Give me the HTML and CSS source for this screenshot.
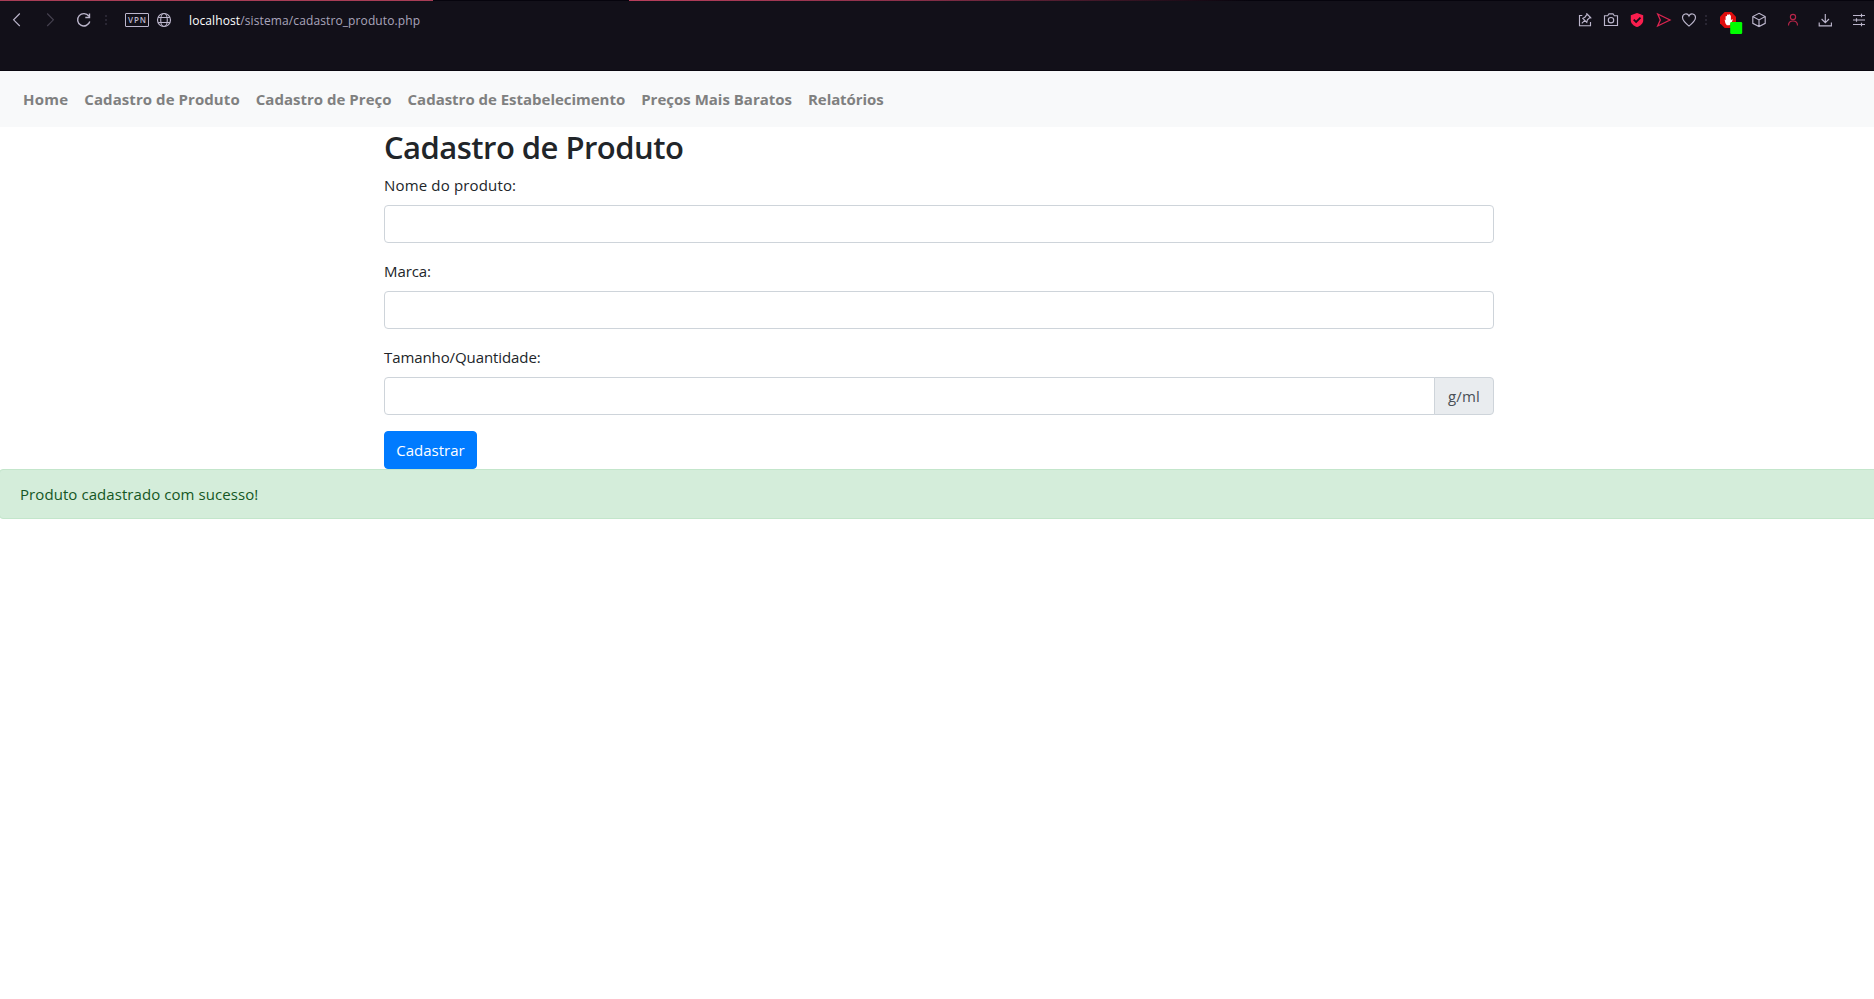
FILE: index.html
```html
<!DOCTYPE html>
<html lang="pt-BR">
<head>
<meta charset="utf-8">
<title>Cadastro de Produto</title>
<link rel="stylesheet" href="styles.css">
</head>
<body>
<header class="browser">
  <div class="tab-line"><span class="tab-line-left"></span><span class="tab-line-right"></span></div>
  <div class="toolbar">
    <svg class="icon back" viewBox="0 0 16 16"><path d="M11.8 1.5 5.6 7.8l6.2 6.2"/></svg>
    <svg class="icon forward" viewBox="0 0 16 16"><path d="M5.2 1.5l6.2 6.3L5.2 14"/></svg>
    <svg class="icon reload" viewBox="0 0 16 16"><path d="M12.9 4.2A6.2 6.2 0 1 0 13.8 9.5M13.5 1.5v4H9.3"/></svg>
    <svg class="dots dots-left" viewBox="0 0 4 12"><path d="M1 1h2v2H1zM1 5h2v2H1zM1 9h2v2H1z"/></svg>
    <span class="vpn">VPN</span>
    <svg class="icon globe" viewBox="0 0 16 16"><circle cx="8" cy="8" r="6.5"/><ellipse cx="8" cy="8" rx="3.3" ry="6.5"/><path d="M2.2 5.5h11.6M2.2 10.5h11.6"/></svg>
    <span class="url"><b>localhost</b>/sistema/cadastro_produto.php</span>
    <div class="actions">
      <svg class="icon pin" viewBox="0 0 16 16"><path d="M5.3 3.5H2.5v10.2h11V10M4.8 11.3l3-3M5.8 6.3l4 4 .6-2.6 2.9-2.4-3.1-3.2-2.3 3.1zM9.3 1.3l5 5"/></svg>
      <svg class="icon camera" viewBox="0 0 16 16"><path d="M1.5 3.7h3.2L6 1.8h4l1.3 1.9h3.2v9.8h-13z"/><circle cx="8" cy="8.2" r="2.7"/></svg>
      <svg class="icon shield" viewBox="0 0 16 16"><path class="shield-body" d="M8 .9l6.2 2.3v5.2c0 3.3-3.2 5.4-6.2 6.7-3-1.3-6.2-3.4-6.2-6.7V3.2z"/><path class="shield-check" d="M4.7 7.6l2.4 2.3 4.4-4.3"/></svg>
      <svg class="icon send" viewBox="0 0 16 16"><path d="M1.7 2l12.3 6-12.3 6 2.6-6z"/></svg>
      <svg class="icon heart" viewBox="0 0 16 16"><path d="M8 14.1C4.6 11.4 1.5 8.9 1.5 5.6c0-4 5-5 6.5-1.6 1.5-3.4 6.5-2.4 6.5 1.6 0 3.3-3.1 5.8-6.5 8.5z"/></svg>
      <svg class="dots dots-right" viewBox="0 0 4 12"><path d="M1 1h2v2H1zM1 5h2v2H1zM1 9h2v2H1z"/></svg>
      <svg class="blocker" viewBox="0 0 23 23"><path class="stop" d="M4.7 0h6.6L16 4.7v6.6L11.3 16H4.7L0 11.3V4.7z"/><path class="hand" d="M4.6 7.4l1 .8V4.2l.9-.3.5.4V2.8l.9-.2.5.3.4-.7h.9l.4 1 .8.2v5l1-1.2 1 .4-2 4.2-1.4 1.5H6.8L5.4 11.3z"/><rect class="badge" x="10.2" y="10" width="12" height="12" rx="1.2"/></svg>
      <svg class="icon cube" viewBox="0 0 16 16"><path d="M8 1.3l6.2 3.2v6.8L8 14.6l-6.2-3.3V4.5zM1.8 4.5L8 7.9l6.2-3.4M8 7.9v6.7"/></svg>
      <svg class="icon person" viewBox="0 0 16 16"><circle cx="8" cy="5" r="2.6"/><path d="M3.5 13.5c0-6 9-6 9 0"/></svg>
      <svg class="icon download" viewBox="0 0 16 16"><path d="M8.3 2v8.3M4.6 7l3.7 3.6L12 7M2.2 10.5v3.3h12.2v-3.3"/></svg>
      <svg class="icon settings" viewBox="0 0 16 16"><path d="M2 3.5h12M2 8h12M2 12.5h12M10.5 1.8v3.4M5.5 6.3v3.4M10.5 10.8v3.4"/></svg>
    </div>
  </div>
</header>
<main class="page">
  <nav class="navbar">
    <a class="nav-link nav-home">Home</a>
    <a class="nav-link nav-product">Cadastro de Produto</a>
    <a class="nav-link nav-price">Cadastro de Preço</a>
    <a class="nav-link nav-store">Cadastro de Estabelecimento</a>
    <a class="nav-link nav-cheap">Preços Mais Baratos</a>
    <a class="nav-link nav-reports">Relatórios</a>
  </nav>
  <div class="container">
    <h2 class="title">Cadastro de Produto</h2>
    <form>
      <div class="form-group">
        <label class="label label-name" for="nome">Nome do produto:</label>
        <input class="control" id="nome" type="text">
      </div>
      <div class="form-group">
        <label class="label label-brand" for="marca">Marca:</label>
        <input class="control" id="marca" type="text">
      </div>
      <div class="form-group">
        <label class="label label-size" for="tamanho">Tamanho/Quantidade:</label>
        <div class="input-group">
          <input class="control" id="tamanho" type="text">
          <span class="addon">g/ml</span>
        </div>
      </div>
      <button class="submit" type="button">Cadastrar</button>
    </form>
  </div>
  <div class="alert">Produto cadastrado com sucesso!</div>
</main>
</body>
</html>
```
FILE: styles.css
```css
* { box-sizing: border-box; }

body {
  margin: 0;
  height: 999px;
  overflow: hidden;
  background: #fff;
  color: #212529;
  font: 400 15px/24px "Open Sans", "Noto Sans", sans-serif;
}

/* Browser chrome */
.browser {
  height: 71px;
  background: #121019;
  border-bottom: 1px solid #09070f;
}
.tab-line { display: flex; height: 1px; background: #06040d; }
.tab-line-left { width: 433px; background: #a83d56; }
.tab-line-right {
  width: 620px;
  margin-left: 196px;
  background: linear-gradient(90deg, #b83f5c, #8b304a 45%, #06040d);
}
.toolbar { display: flex; align-items: center; height: 38px; padding: 0 7px 0 8px; }
.icon {
  flex: none;
  width: 16px;
  height: 16px;
  fill: none;
  stroke: #bcb6cc;
  stroke-width: 1.15;
}
.forward { margin-left: 18px; stroke: #45414f; }
.reload { margin-left: 18px; stroke-width: 1.4; }
.dots { flex: none; width: 4px; height: 12px; fill: #292633; }
.dots-left { margin-left: 12px; }
.vpn {
  width: 24px;
  height: 14px;
  margin-left: 17px;
  border: 1px solid #bcb6cc;
  border-radius: 1px;
  color: #bcb6cc;
  font-size: 8px;
  font-weight: 600;
  line-height: 12px;
  letter-spacing: 0.9px;
  text-align: center;
  text-indent: 1px;
}
.globe { margin-left: 7px; }
.url {
  margin-left: 17px;
  padding-top: 1px;
  color: #aaa5bc;
  font-size: 12px;
  letter-spacing: 0.11px;
  white-space: nowrap;
}
.url b { color: #fff; font-weight: 400; }
.actions { display: flex; align-items: center; height: 38px; margin-left: auto; }
.camera { margin-left: 10px; }
.shield { margin-left: 10px; }
.shield-body { fill: #fa1e4e; stroke: none; }
.shield-check { stroke: #121019; stroke-width: 1.8; }
.send { margin-left: 11px; stroke: #dc2450; stroke-width: 1.3; }
.heart { margin-left: 9px; }
.dots-right { margin-left: 7px; }
.blocker { width: 23px; height: 23px; margin: 7px 0 0 12px; }
.cube { margin-left: 8px; }
.stop { fill: #df0d0d; }
.hand { fill: #fff; }
.badge { fill: #0f0; }
.person { margin-left: 18px; stroke: #b82549; }
.download { margin-left: 16px; }
.settings { margin-left: 18px; }

/* Page, slightly wider than the visible window */
.page { width: 1878px; }
.navbar {
  display: flex;
  align-items: center;
  height: 56px;
  padding: 8px 15px;
  background: #f8f9fa;
}
.nav-link {
  padding: 8px;
  color: #7f8080;
  font-weight: 700;
  white-space: nowrap;
}
.nav-home { letter-spacing: 0.25px; }
.nav-product { letter-spacing: 0.07px; }
.nav-price { letter-spacing: 0.02px; }
.nav-store { letter-spacing: -0.02px; }
.nav-reports { letter-spacing: -0.08px; }
.container { width: 1140px; margin: 0 auto; padding: 0 15px; }
.title {
  margin: 0 0 8px;
  padding-top: 2px;
  font-size: 31px;
  font-weight: 600;
  line-height: 36.4px;
  letter-spacing: -0.53px;
}
.form-group { margin-bottom: 16px; }
.label { display: table; margin-bottom: 8px; }
.label-name { letter-spacing: 0.16px; }
.label-brand { letter-spacing: -0.1px; }
.label-size { letter-spacing: -0.09px; }
.control {
  display: block;
  width: 100%;
  height: 38px;
  padding: 6px 12px;
  border: 1px solid #ced4da;
  border-radius: 4px;
  background: #fff;
  font: inherit;
}
.input-group { display: flex; }
.input-group .control {
  flex: 1;
  border-top-right-radius: 0;
  border-bottom-right-radius: 0;
}
.addon {
  width: 60px;
  margin-left: -1px;
  padding: 6px 0;
  border: 1px solid #ced4da;
  border-radius: 0 4px 4px 0;
  background: #e9ecef;
  color: #495057;
  letter-spacing: 0.2px;
  text-align: center;
}
.submit {
  display: block;
  width: 93px;
  height: 38px;
  padding: 0;
  border: 1px solid #007bff;
  border-radius: 4px;
  background: #007bff;
  color: #fff;
  font: inherit;
}
.alert {
  height: 50px;
  margin-left: -1px;
  padding: 12px 20px;
  border: 1px solid #c3e6cb;
  border-radius: 4px;
  background: #d4edda;
  color: #155724;
  letter-spacing: 0.07px;
}
```
